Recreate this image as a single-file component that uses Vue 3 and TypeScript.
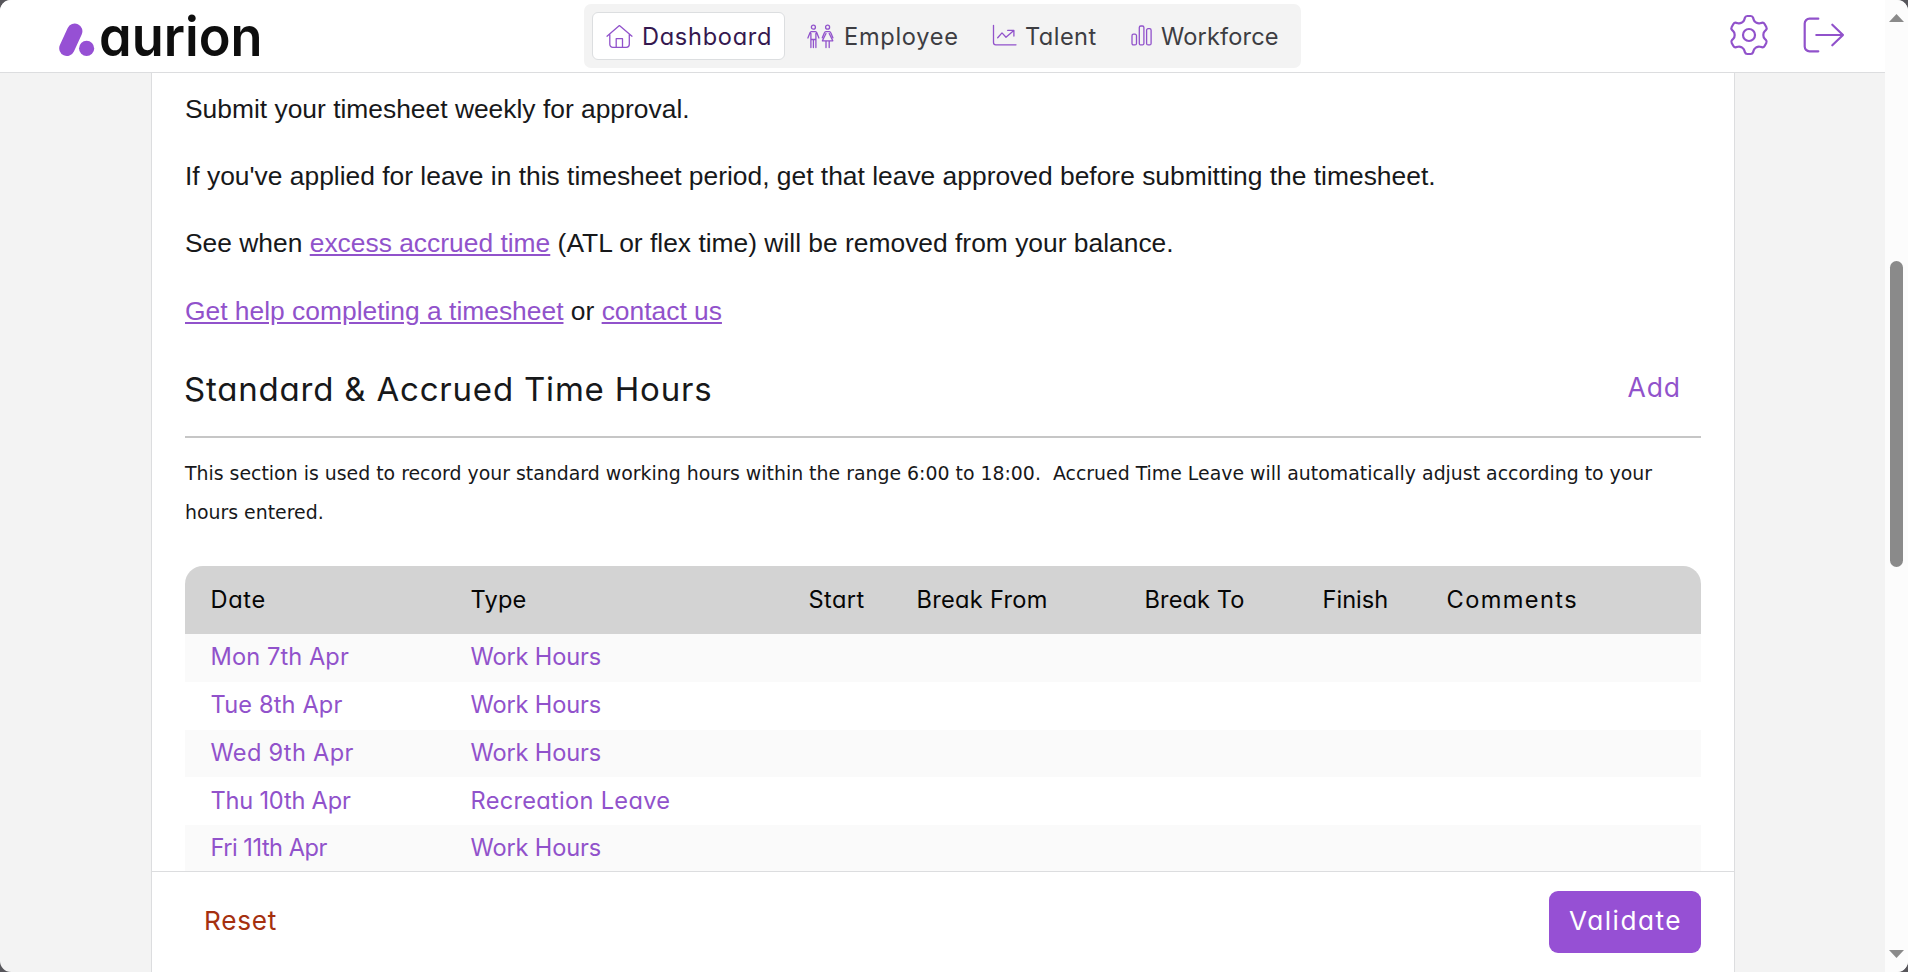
<script setup lang="ts">
interface Label {
  text: string
  tracking: number
}
interface NavItem extends Label {
  icon: 'home' | 'people' | 'chart' | 'bars'
  active?: boolean
}
interface Entry {
  date: Label
  type: Label
}

const navItems: NavItem[] = [
  { text: 'Dashboard', tracking: 0.7, icon: 'home', active: true },
  { text: 'Employee', tracking: 0.7, icon: 'people' },
  { text: 'Talent', tracking: 0.45, icon: 'chart' },
  { text: 'Workforce', tracking: 0.15, icon: 'bars' },
]

const columns: Label[] = [
  { text: 'Date', tracking: 0.7 },
  { text: 'Type', tracking: 0.2 },
  { text: 'Start', tracking: 0.4 },
  { text: 'Break From', tracking: 0.3 },
  { text: 'Break To', tracking: 0.1 },
  { text: 'Finish', tracking: 0 },
  { text: 'Comments', tracking: 1.4 },
]

const workHours: Label = { text: 'Work Hours', tracking: -0.15 }
const entries: Entry[] = [
  { date: { text: 'Mon 7th Apr', tracking: 0.1 }, type: workHours },
  { date: { text: 'Tue 8th Apr', tracking: 0.15 }, type: workHours },
  { date: { text: 'Wed 9th Apr', tracking: 0.3 }, type: workHours },
  { date: { text: 'Thu 10th Apr', tracking: -0.2 }, type: { text: 'Recreation Leave', tracking: 0.3 } },
  { date: { text: 'Fri 11th Apr', tracking: -0.5 }, type: workHours },
]

const spacing = (l: Label) => ({ letterSpacing: `${l.tracking}px` })

// Six-toothed gear outline with softened corners, centred on the origin.
function gearPath(): string {
  const tooth: [number, number][] = [[-5.2, -13.6], [-3.6, -19], [3.6, -19], [5.2, -13.6]]
  const pts: [number, number][] = []
  for (let k = 0; k < 6; k++) {
    const a = (k * Math.PI) / 3
    for (const [x, y] of tooth) {
      pts.push([x * Math.cos(a) - y * Math.sin(a), x * Math.sin(a) + y * Math.cos(a)])
    }
  }
  const toward = (p: [number, number], q: [number, number], r: number) => {
    const d = Math.hypot(q[0] - p[0], q[1] - p[1])
    return `${(p[0] + ((q[0] - p[0]) * r) / d).toFixed(2)} ${(p[1] + ((q[1] - p[1]) * r) / d).toFixed(2)}`
  }
  const n = pts.length
  return (
    pts
      .map((p, i) => {
        const from = toward(p, pts[(i + n - 1) % n], 1.9)
        const to = toward(p, pts[(i + 1) % n], 1.9)
        return `${i ? 'L' : 'M'}${from} Q${p[0].toFixed(2)} ${p[1].toFixed(2)} ${to}`
      })
      .join(' ') + 'Z'
  )
}
const gear = gearPath()
</script>

<template>
  <div class="window">
    <div class="page">
      <header class="topbar">
        <svg class="logo" width="212" height="72" viewBox="0 0 212 72">
          <path d="M17.7 31.2 L9.9 48.2" stroke="#9650d4" stroke-width="15.4" stroke-linecap="round" />
          <circle cx="29.6" cy="48.4" r="7.6" fill="#9650d4" />
          <text x="42" y="56" textLength="163.500" lengthAdjust="spacingAndGlyphs" class="wordmark">aurion</text>
        </svg>

        <nav class="nav">
          <a v-for="item in navItems" :key="item.text" class="nav-item" :class="[item.icon, { active: item.active }]">
            <svg v-if="item.icon === 'home'" class="ico" width="28" height="25" viewBox="0 0 28 25">
              <path d="M1 12.2 13.4 1.6 26 12.2M3.8 10.4v9.9a3 3 0 0 0 3 3h13.5a3 3 0 0 0 3-3v-9.9M10.2 23.3v-8.6h6.3v8.6" />
            </svg>
            <svg v-else-if="item.icon === 'people'" class="ico" width="28" height="25" viewBox="0 0 28 25">
              <circle cx="6.4" cy="3.2" r="2" />
              <path d="M.9 14 3 8.8Q3.3 7.6 4.4 7.6h4q1.1 0 1.4 1.2L11.9 14M3.9 9.5v14M8.9 9.5v14M6.4 15.5v8M3.9 15.5h5" />
              <circle cx="20.6" cy="3.2" r="2" />
              <path d="M15.3 13.8l2.1-5Q17.8 7.6 18.9 7.6h3.4q1.100 0 1.500 1.200l2.100 5M19 9.500l-3.600 7.300h10.400L22.200 9.500M19 16.800v6.700M22.200 16.800v6.700" />
            </svg>
            <svg v-else-if="item.icon === 'chart'" class="ico" width="25" height="24" viewBox="0 0 25 24">
              <path d="M1.500 1.300v17.200a2.300 2.300 0 0 0 2.300 2.300H24M5.700 13.700 10 8.900l4 4.300 7.800-6.800M15.700 6.400h6.200V12" />
            </svg>
            <svg v-else class="ico" width="22" height="24" viewBox="0 0 22 24">
              <rect x="1" y="10.200" width="4.500" height="10.700" rx="1.500" />
              <rect x="8.300" y="2" width="4.600" height="18.900" rx="1.500" />
              <rect x="15.600" y="4.700" width="4.500" height="16.200" rx="1.500" />
            </svg>
            <span :style="spacing(item)">{{ item.text }}</span>
          </a>
        </nav>

        <div class="actions">
          <svg class="act" width="42" height="44" viewBox="-21 -22 42 44">
            <path :d="gear" />
            <circle r="6" />
          </svg>
          <svg class="act" width="44" height="40" viewBox="0 0 44 40">
            <path d="M16.300 3.700H7.500a4.800 4.800 0 0 0-4.800 4.800v23a4.800 4.800 0 0 0 4.800 4.800h8.800M14.300 20H41M30.300 9.700 41 20 30.300 30.300" />
          </svg>
        </div>
      </header>

      <main class="sheet">
        <section class="content">
          <div class="intro">
            <p>Submit your timesheet weekly for approval.</p>
            <p>If you've applied for leave in this timesheet period, get that leave approved before submitting the timesheet.</p>
            <p>See when <a>excess accrued time</a> (ATL or flex time) will be removed from your balance.</p>
            <p><a>Get help completing a timesheet</a> or <a>contact us</a></p>
          </div>

          <div class="section-head">
            <h2>Standard &amp; Accrued Time Hours</h2>
            <a class="add">Add</a>
          </div>
          <p class="note">This section is used to record your standard working hours within the range 6:00 to 18:00.&nbsp; Accrued Time Leave will automatically adjust according to your hours entered.</p>

          <div class="table">
            <div class="row head">
              <span v-for="c in columns" :key="c.text" :style="spacing(c)">{{ c.text }}</span>
            </div>
            <div v-for="e in entries" :key="e.date.text" class="row entry">
              <span :style="spacing(e.date)">{{ e.date.text }}</span>
              <span :style="spacing(e.type)">{{ e.type.text }}</span>
            </div>
          </div>
        </section>

        <footer class="footer">
          <a class="reset">Reset</a>
          <button class="validate">Validate</button>
        </footer>
      </main>
    </div>

    <aside class="scrollbar">
      <svg width="15" height="8" viewBox="0 0 15 8"><path d="M0 8 7.500 0 15 8z" /></svg>
      <div class="track"><div class="thumb"></div></div>
      <svg width="15" height="8" viewBox="0 0 15 8"><path d="M0 0h15L7.500 8z" /></svg>
    </aside>
  </div>
</template>

<style>
body {
  margin: 0;
  background: #57565b;
}
</style>

<style scoped>
.window {
  display: flex;
  width: 1908px;
  height: 972px;
  border-radius: 11px;
  overflow: hidden;
  background: #f3f3f3;
  font-family: Inter, 'Open Sans', sans-serif;
  font-feature-settings: 'cv11';
  color: #17181a;
}
.page {
  width: 1885px;
  display: flex;
  flex-direction: column;
}
.topbar {
  box-sizing: border-box;
  height: 73px;
  flex: none;
  display: flex;
  align-items: flex-start;
  background: #fff;
  border-bottom: 1px solid #dcdddf;
}
.logo {
  margin-left: 57px;
  flex: none;
  fill: none;
}
.wordmark {
  font: 600 54px Inter, sans-serif;
  font-feature-settings: 'cv11';
  fill: #0e0e0e;
}
.nav {
  box-sizing: border-box;
  width: 717px;
  height: 64px;
  margin: 4px 0 0 315px;
  padding: 8px;
  display: flex;
  gap: 8px;
  background: #f3f3f3;
  border-radius: 7px;
}
.nav-item {
  box-sizing: border-box;
  height: 48px;
  padding: 0 13px;
  border: 1px solid transparent;
  border-radius: 6px;
  display: flex;
  align-items: center;
  gap: 8px;
  font-size: 23.6px;
  color: #3d3d42;
  white-space: nowrap;
}
.nav-item.home { width: 193px; }
.nav-item.people { width: 177px; gap: 9px; }
.nav-item.chart { width: 131px; }
.nav-item.active {
  background: #fff;
  border-color: #dcdee0;
  color: #35184f;
}
.ico {
  flex: none;
  fill: none;
  stroke: #9152cb;
  stroke-width: 1.3;
  stroke-linecap: round;
  stroke-linejoin: round;
}
.actions {
  display: flex;
  align-items: center;
  gap: 32px;
  margin: 13px 0 0 426.5px;
}
.act {
  flex: none;
  fill: none;
  stroke: #9152cb;
  stroke-width: 2.2;
  stroke-linecap: round;
  stroke-linejoin: round;
}
.sheet {
  box-sizing: border-box;
  width: 1584px;
  height: 899px;
  margin-left: 151px;
  background: #fff;
  border: solid #dcdddf;
  border-width: 0 1px;
  display: flex;
  flex-direction: column;
}
.content {
  height: 798px;
  padding: 0 33px;
  overflow: hidden;
}
.intro {
  box-sizing: border-box;
  height: 271px;
  padding-top: 3px;
  font: 26.4px/67.2px 'Liberation Sans', Arial, sans-serif;
}
.intro p {
  margin: 0;
}
.intro a {
  color: #9152cb;
  text-decoration: underline;
}
.section-head {
  box-sizing: border-box;
  height: 94px;
  display: flex;
  justify-content: space-between;
  align-items: flex-start;
  border-bottom: 2px solid #c6c6c6;
}
h2 {
  margin: 25px 0 0 -1px;
  font-weight: 400;
  font-size: 33px;
  line-height: 40px;
  letter-spacing: 0.8px;
}
.add {
  margin: 23px 20px 0 0;
  font-size: 26.5px;
  line-height: 40px;
  letter-spacing: 0.9px;
  color: #9152cb;
}
.note {
  margin: 16px 0 34px;
  font: 18.9px/39px 'DejaVu Sans', Verdana, sans-serif;
}
.row {
  box-sizing: border-box;
  display: grid;
  grid-template-columns: 260px 338px 108px 228px 178px 124px 1fr;
  align-items: center;
  height: 47.75px;
  padding: 0 0 1px 25.5px;
  font-size: 23.6px;
  line-height: 32px;
  white-space: nowrap;
  color: #9152cb;
}
.row.head {
  height: 68px;
  border-radius: 18px 18px 0 0;
  background: #d3d3d3;
  color: #060606;
}
.row:nth-child(even) {
  background: #fafafa;
}
.footer {
  box-sizing: border-box;
  height: 101px;
  border-top: 1px solid #dcdddf;
  padding: 0 33px 0 52px;
  display: flex;
  align-items: center;
  justify-content: space-between;
  font-size: 26.2px;
  line-height: 36px;
}
.reset {
  padding-bottom: 2px;
  color: #a5300f;
  letter-spacing: 0.7px;
}
.validate {
  width: 152px;
  height: 62px;
  padding: 0 0 2px 1px;
  border: 0;
  border-radius: 9px;
  background: #9650d4;
  color: #fff;
  font: inherit;
  letter-spacing: 1.5px;
  text-align: center;
}
.scrollbar {
  box-sizing: border-box;
  width: 23px;
  padding: 14px 4px;
  background: #fcfcfc;
  display: flex;
  flex-direction: column;
  fill: #8a8a8a;
}
.scrollbar svg {
  flex: none;
}
.track {
  flex: 1;
  padding: 239px 1px 0;
}
.thumb {
  width: 13px;
  height: 306px;
  border-radius: 7px;
  background: #8a8a8a;
}
</style>
